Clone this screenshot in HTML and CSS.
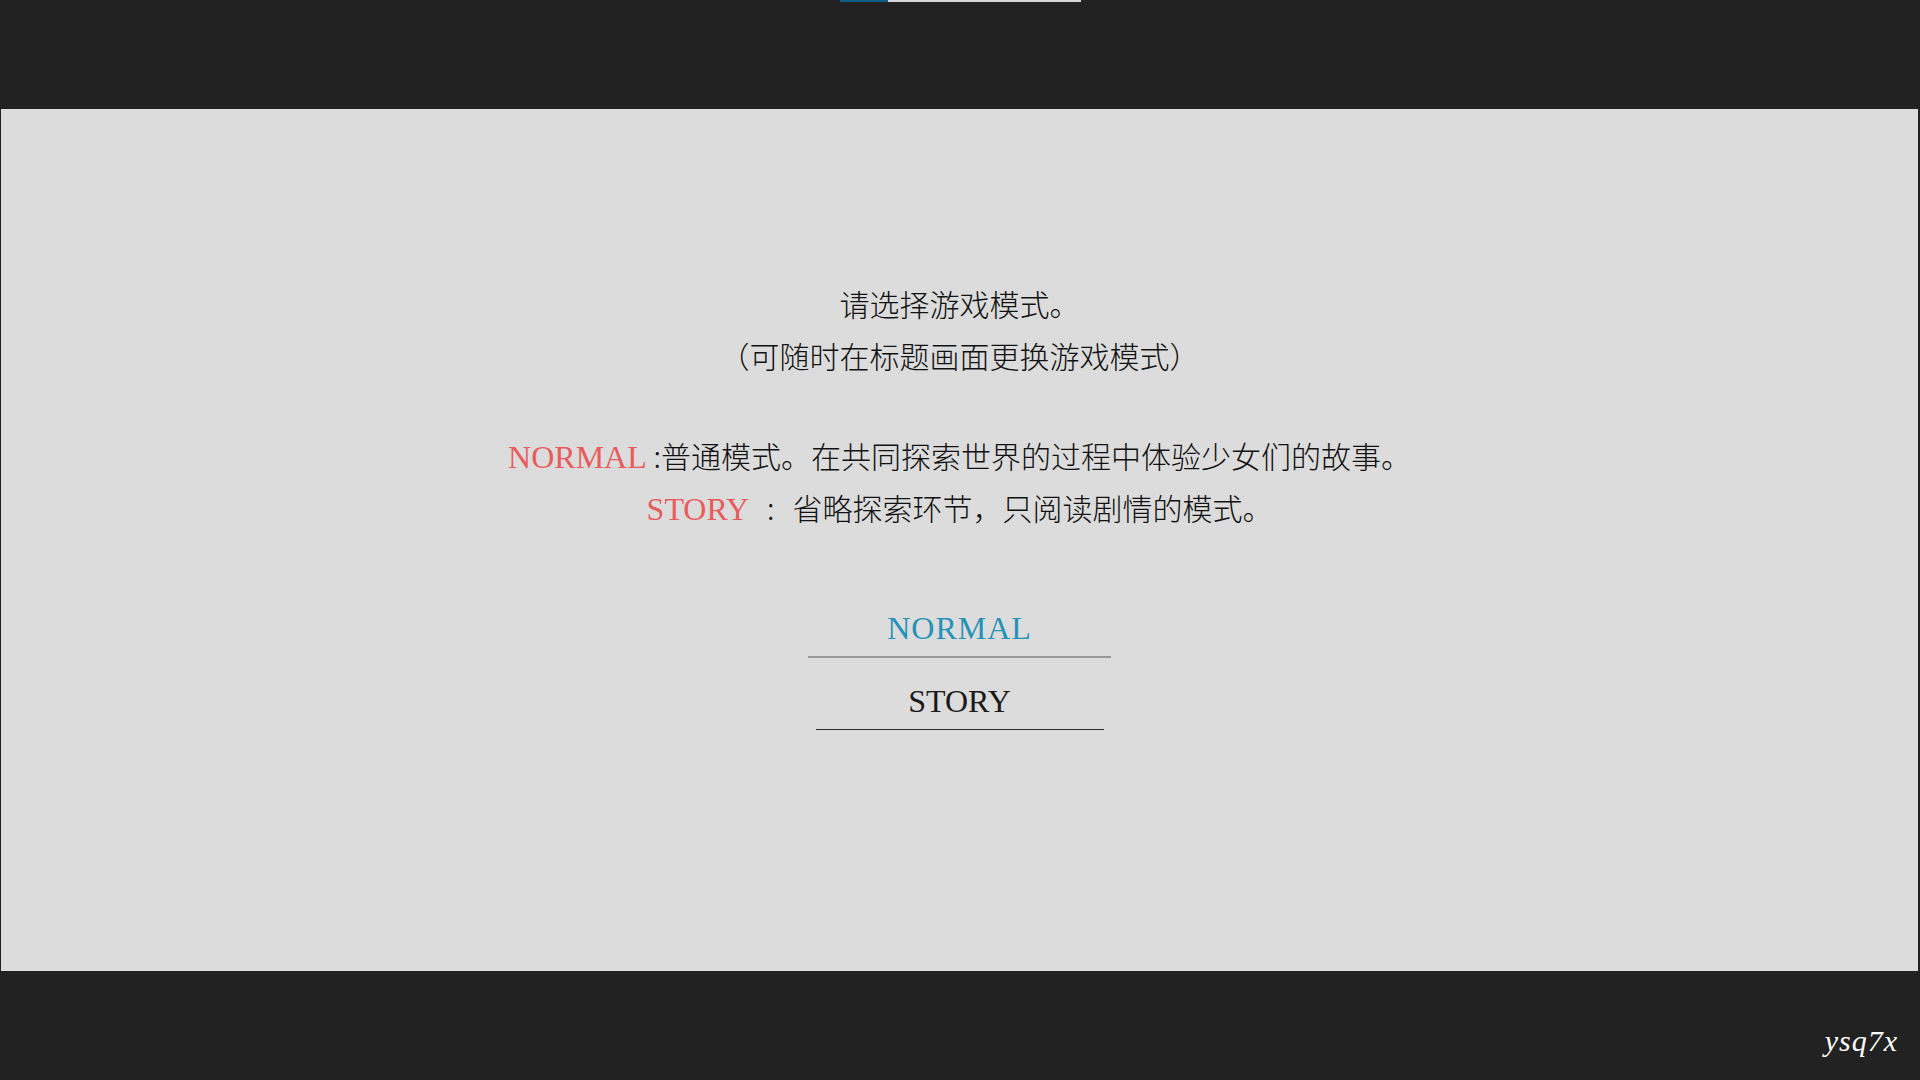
FILE: index.html
```html
<!DOCTYPE html>
<html lang="zh-CN">
<head>
<meta charset="utf-8">
<title>游戏模式选择</title>
<link rel="stylesheet" href="styles.css">
</head>
<body>
<div class="screen">
  <header class="topbar">
    <div class="progress">
      <span class="progress-done"></span>
      <span class="progress-rest"></span>
    </div>
  </header>
  <main class="panel">
    <div class="intro">
      <p class="line">请选择游戏模式。</p>
      <p class="line">（可随时在标题画面更换游戏模式）</p>
      <p class="line blank"></p>
      <p class="line"><span class="mode-name">NORMAL</span> :普通模式。在共同探索世界的过程中体验少女们的故事。</p>
      <p class="line"><span class="mode-name">STORY</span> <span class="colon">:</span> 省略探索环节，只阅读剧情的模式。</p>
    </div>
    <div class="choices">
      <div class="choice choice-active">NORMAL</div>
      <div class="choice choice-story">STORY</div>
    </div>
  </main>
  <footer class="bottombar">
    <span class="watermark">ysq7x</span>
  </footer>
</div>
</body>
</html>
```
FILE: styles.css
```css
* { box-sizing: border-box; }
html, body {
  margin: 0;
  padding: 0;
  background: #222222;
}
.screen {
  width: 1920px;
  height: 1080px;
  display: flex;
  flex-direction: column;
  background: #222222;
  overflow: hidden;
}
.topbar {
  height: 109px;
  flex: none;
}
.progress {
  display: flex;
  margin-left: 840px;
  height: 2px;
}
.progress-done {
  width: 48px;
  background: #0e5e86;
}
.progress-rest {
  width: 193px;
  background: #d8d8d8;
}
.panel {
  height: 862px;
  flex: none;
  margin: 0 2px 0 1px;
  background: #dcdcdc;
  display: flex;
  flex-direction: column;
  align-items: center;
  padding-top: 168px;
}
.intro {
  display: flex;
  flex-direction: column;
  align-items: center;
}
.line {
  margin: 0;
  height: 52px;
  line-height: 52px;
  font-family: "Noto Sans CJK SC", "Liberation Serif", sans-serif;
  font-weight: 300;
  font-size: 30px;
  color: #111111;
  white-space: pre;
}
.line.blank {
  height: 48px;
}
.mode-name {
  font-family: "Liberation Serif", serif;
  font-size: 32px;
  line-height: 1;
  color: #ea5c5c;
}
.colon {
  display: inline-block;
  width: 30px;
  text-align: center;
  font-family: "Noto Sans CJK SC", sans-serif;
}
.choices {
  margin-top: 73px;
  display: flex;
  flex-direction: column;
  align-items: center;
  gap: 21px;
}
.choice {
  font-family: "Liberation Serif", serif;
  font-size: 32px;
  line-height: 44px;
  height: 52px;
  padding-bottom: 6px;
  text-align: center;
  color: #1a1a1a;
}
.choice-active {
  width: 303px;
  color: #2593b8;
  letter-spacing: 1px;
  border-bottom: 2px solid #9a9a9a;
}
.choice-story {
  width: 288px;
  height: 51px;
  border-bottom: 1px solid #2a2a2a;
}
.bottombar {
  flex: 1;
  display: flex;
  justify-content: flex-end;
  align-items: flex-end;
  padding: 0 22px 22px 0;
}
.watermark {
  font-family: "Liberation Serif", serif;
  font-style: italic;
  font-size: 30px;
  color: #ffffff;
  letter-spacing: 1px;
}
```
